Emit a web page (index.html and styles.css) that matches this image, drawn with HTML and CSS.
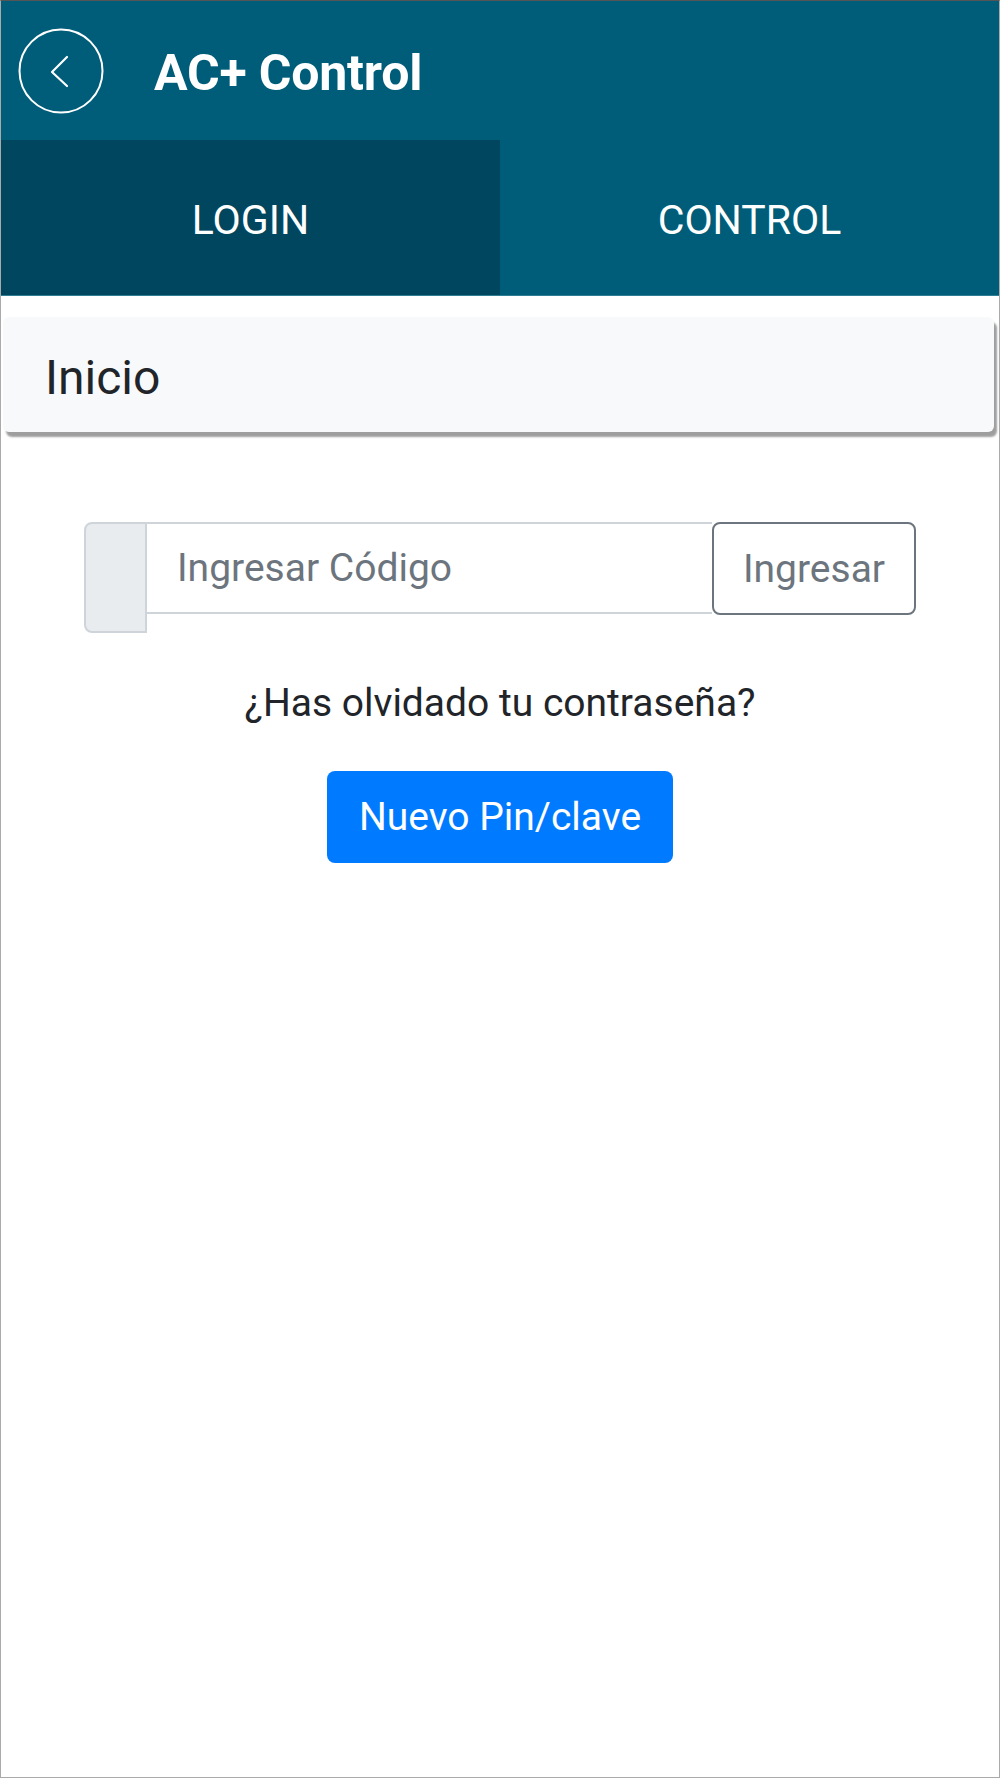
FILE: index.html
```html
<!DOCTYPE html>
<html lang="es">
<head>
  <meta charset="UTF-8">
  <title>AC+ Control</title>
  <link rel="stylesheet" href="styles.css">
</head>
<body>
  <div class="app">

    <header class="topbar">
      <button class="back-btn" aria-label="Volver">
        <svg width="86" height="86" viewBox="0 0 86 86">
          <circle cx="43" cy="43" r="41.5" fill="none" stroke="#fff" stroke-width="2"/>
          <path d="M49 29 L34 44 L49 58" fill="none" stroke="#fff" stroke-width="2.2" stroke-linecap="round" stroke-linejoin="round"/>
        </svg>
      </button>
      <h1 class="title">AC+ Control</h1>
    </header>

    <nav class="tabs">
      <a class="tab active">LOGIN</a>
      <a class="tab">CONTROL</a>
    </nav>

    <div class="card">
      <div class="card-header">Inicio</div>
    </div>

    <div class="login">
      <div class="input-group">
        <span class="addon"></span>
        <input type="text" class="code-input" placeholder="Ingresar Código">
        <button class="btn-outline">Ingresar</button>
      </div>

      <p class="forgot">¿Has olvidado tu contraseña?</p>

      <button class="btn-primary">Nuevo Pin/clave</button>
    </div>

  </div>
</body>
</html>
```

FILE: styles.css
```css
* {
  box-sizing: border-box;
}

body {
  margin: 0;
  font-family: Roboto, "Noto Sans", "Liberation Sans", sans-serif;
  background-color: #fff;
  color: #212529;
}

.app {
  width: 1000px;
  height: 1778px;
  border: 1px solid #aaa;
  border-top-color: #555;
  overflow: hidden;
}

/* header */
.topbar {
  height: 139px;
  background-color: #005d79;
  display: flex;
  align-items: center;
  padding-left: 17px;
}

.back-btn {
  background: none;
  border: none;
  padding: 0;
  width: 86px;
  height: 86px;
  margin-top: 1px;
}

.back-btn svg {
  display: block;
}

.title {
  margin: 4px 0 0 50px;
  color: #fff;
  font-size: 50px;
  font-weight: bold;
  letter-spacing: -0.2px;
}

/* tabs */
.tabs {
  display: flex;
  height: 156px;
  background-color: #005d79;
  border-bottom: 1px solid #2d7d95;
}

.tab {
  flex: 1;
  display: flex;
  align-items: center;
  justify-content: center;
  color: #fff;
  font-size: 41px;
  padding-top: 4px;
}

.tab.active {
  background-color: #00465e;
}

/* card */
.card {
  margin: 21px 5px 0 2px;
  background-color: #f8f9fa;
  border-radius: 6px;
  box-shadow: 3px 5px 2px rgba(0, 0, 0, 0.38);
}

.card-header {
  height: 115px;
  display: flex;
  align-items: center;
  padding-left: 42px;
  padding-top: 6px;
  font-size: 48px;
}

/* login form */
.login {
  display: flex;
  flex-direction: column;
  align-items: center;
  padding-top: 90px;
}

.input-group {
  display: flex;
  align-items: flex-start;
  width: 832px;
}

.addon {
  width: 63px;
  height: 111px;
  background-color: #e9ecef;
  border: 2px solid #ced4da;
  border-radius: 8px 0 0 8px;
}

.code-input {
  flex: 1;
  height: 92px;
  border: 2px solid #ced4da;
  border-left: none;
  border-right: none;
  padding: 0 30px;
  font-family: inherit;
  font-size: 39px;
  color: #495057;
  outline: none;
}

.code-input::placeholder {
  color: #6c757d;
}

.btn-outline {
  width: 204px;
  height: 93px;
  background-color: #fff;
  border: 2px solid #6c757d;
  border-radius: 8px;
  color: #6c757d;
  font-family: inherit;
  font-size: 39px;
}

.forgot {
  margin: 41px 0 0;
  font-size: 39px;
  line-height: 1.5;
}

.btn-primary {
  margin-top: 38px;
  height: 92px;
  padding: 0 32px;
  background-color: #007bff;
  border: none;
  border-radius: 8px;
  color: #fff;
  font-family: inherit;
  font-size: 39px;
}
```
